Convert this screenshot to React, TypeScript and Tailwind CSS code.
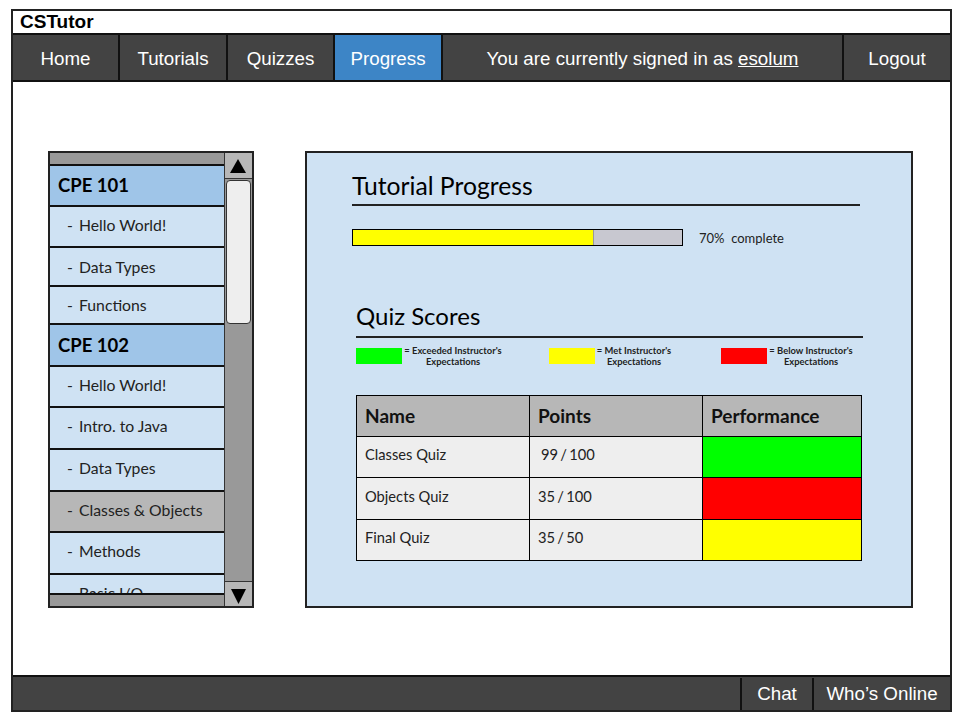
const lato = "font-['Lato','Noto_Sans',sans-serif]";
const arial = "font-['Liberation_Sans',Arial,sans-serif]";

function NavCell({ label, w, active }: { label: string; w: string; active?: boolean }) {
  return (
    <div className={`${w} h-full flex items-center justify-center pt-[3px] text-[18.75px] text-white border-r-2 border-[#111] ${active ? 'bg-[#3d85c6]' : 'bg-[#434343]'}`}>
      {label}
    </div>
  );
}

function Row({ label, h, sel, low }: { label: string; h: string; sel?: boolean; low?: boolean }) {
  return (
    <div className={`${h} shrink-0 flex items-center pl-[17px] ${low ? 'pb-0' : 'pb-[4px]'} text-[15.75px] text-[#222] border-b-2 border-[#111] ${sel ? 'bg-[#b7b7b7]' : 'bg-[#cfe2f3]'}`}>
      <span className="w-[12px]">-</span>
      <span>{label}</span>
    </div>
  );
}

function Head({ label, h, low }: { label: string; h: string; low?: boolean }) {
  return (
    <div className={`${h} shrink-0 flex items-center pl-[8px] ${low ? 'pt-[2px]' : ''} text-[18.5px] font-bold text-black bg-[#9fc5e8] border-b-2 border-[#111]`}>
      {label}
    </div>
  );
}

function Legend({ color, a, w, ml }: { color: string; a: string; w: string; ml: string }) {
  return (
    <div className={`flex items-start ${ml}`}>
      <div className={`w-[46px] h-[16px] ${color}`} />
      <div className={`${w} ml-[1px] -mt-[3px] text-center text-[9.4px] leading-[11px] font-bold text-[#222] whitespace-nowrap`}>
        <div>{a}</div>
        <div>Expectations</div>
      </div>
    </div>
  );
}

function TableRow({ name, pts, color, h, indent }: { name: string; pts: string; color: string; h: string; indent?: boolean }) {
  return (
    <div className={`flex ${h} border-b border-black`}>
      <div className="w-[173px] pl-[8px] pb-[5px] flex items-center text-[14.7px] text-[#222] bg-[#eeeeee] border-r border-black">{name}</div>
      <div className={`w-[173px] ${indent ? 'pl-[11px]' : 'pl-[8px]'} pb-[5px] flex items-center text-[14.7px] text-[#222] bg-[#eeeeee] border-r border-black [word-spacing:-1.5px]`}>{pts}</div>
      <div className={`flex-1 ${color}`} />
    </div>
  );
}

export default function App() {
  return (
    <div className="w-[960px] h-[720px] bg-white pt-[9px] pl-[11px]">
      <div className={`w-[941px] h-[703px] border-2 border-[#222] flex flex-col bg-white ${arial}`}>
        <div className="h-[22px] shrink-0 pl-[7px] flex items-center text-[19px] font-bold text-black">CSTutor</div>
        <div className="h-[49px] shrink-0 flex border-y-2 border-[#111] bg-[#434343]">
          <NavCell label="Home" w="w-[107px]" />
          <NavCell label="Tutorials" w="w-[108px]" />
          <NavCell label="Quizzes" w="w-[107px]" />
          <NavCell label="Progress" w="w-[108px]" active />
          <div className="w-[401px] h-full flex items-center justify-center pt-[3px] text-[18.75px] text-white border-r-2 border-[#111]">
            <span>You are currently signed in as <span className="underline">esolum</span></span>
          </div>
          <div className="flex-1 flex items-center justify-center pt-[3px] text-[18.75px] text-white">Logout</div>
        </div>

        <div className={`flex-1 flex items-start pl-[35px] pt-[69px] ${lato}`}>
          <div className="w-[206px] h-[457px] border-2 border-[#222] flex bg-[#999999]">
            <div className="w-[174px] h-full flex flex-col overflow-hidden">
              <div className="h-[13px] shrink-0 bg-[#999999] border-b-2 border-[#111]" />
              <div className="flex-1 overflow-hidden flex flex-col min-h-0">
                <Head label="CPE 101" h="h-[41px]" />
                <Row label="Hello World!" h="h-[41px]" />
                <Row label="Data Types" h="h-[39px]" low />
                <Row label="Functions" h="h-[38px]" low />
                <Head label="CPE 102" h="h-[42px]" low />
                <Row label="Hello World!" h="h-[41px]" />
                <Row label="Intro. to Java" h="h-[42px]" />
                <Row label="Data Types" h="h-[42px]" />
                <Row label="Classes & Objects" h="h-[41px]" sel />
                <Row label="Methods" h="h-[42px]" />
                <Row label="Basic I/O" h="h-[41px]" />
              </div>
              <div className="h-[13px] shrink-0 bg-[#999999] border-t-2 border-[#111]" />
            </div>
            <div className="flex-1 h-full flex flex-col border-l border-[#333]">
              <div className="h-[26px] shrink-0 bg-[#b7b7b7] border-b border-[#333] flex items-center justify-center pr-[1px]">
                <svg width="16" height="14" viewBox="0 0 16 14"><path d="M8 0 L16 14 L0 14 Z" fill="#000" /></svg>
              </div>
              <div className="flex-1 px-[1px] pt-[1px]">
                <div className="h-[144px] bg-[#eeeeee] border border-[#333] rounded-[4px]" />
              </div>
              <div className="h-[25px] shrink-0 bg-[#b7b7b7] border-t border-[#333] flex items-center justify-center pt-[4px] pr-[1px]">
                <svg width="15" height="15" viewBox="0 0 15 15"><path d="M0 0 L15 0 L7.5 15 Z" fill="#000" /></svg>
              </div>
            </div>
          </div>

          <div className="ml-[51px] w-[608px] h-[457px] border-2 border-[#222] bg-[#cfe2f3] pt-[19px] pl-[45px]">
            <div className="w-[508px] h-[34px] border-b-2 border-[#222] text-[24.7px] leading-[28px] text-black">Tutorial Progress</div>
            <div className="mt-[23px] h-[17px] flex items-center">
              <div className="w-[331px] h-[17px] border border-black bg-[#c8c8d0]">
                <div className="w-[73.2%] h-full bg-[#ffff00] border-r border-[#999]" />
              </div>
              <div className="ml-[16px] mt-[2px] text-[13px] text-[#222] whitespace-pre">70%  complete</div>
            </div>
            <div className="ml-[4px] mt-[56px] w-[507px] h-[36px] border-b-2 border-[#222] text-[24px] leading-[28px] text-black">Quiz Scores</div>
            <div className="ml-[4px] mt-[10px] flex h-[20px]">
              <Legend color="bg-[#00ff00]" a="= Exceeded Instructor's" w="w-[100px]" ml="" />
              <Legend color="bg-[#ffff00]" a="= Met Instructor's" w="w-[76px]" ml="ml-[46px]" />
              <Legend color="bg-[#ff0000]" a="= Below Instructor's" w="w-[86px]" ml="ml-[49px]" />
            </div>
            <div className="ml-[4px] mt-[27px] w-[506px] border border-black border-b-0">
              <div className="flex h-[41px] border-b border-black bg-[#b7b7b7] text-[19px] font-bold text-[#111]">
                <div className="w-[173px] pl-[8px] flex items-center border-r border-black">Name</div>
                <div className="w-[173px] pl-[8px] flex items-center border-r border-black">Points</div>
                <div className="flex-1 pl-[8px] flex items-center">Performance</div>
              </div>
              <TableRow name="Classes Quiz" pts="99 / 100" color="bg-[#00ff00]" h="h-[41px]" indent />
              <TableRow name="Objects Quiz" pts="35 / 100" color="bg-[#ff0000]" h="h-[42px]" />
              <TableRow name="Final Quiz" pts="35 / 50" color="bg-[#ffff00]" h="h-[41px]" />
            </div>
          </div>
        </div>

        <div className="h-[35px] shrink-0 flex border-t-2 border-[#111] bg-[#434343] pt-[1px] text-[18.75px] text-white">
          <div className="flex-1 border-r-2 border-[#111]" />
          <div className="w-[72px] flex items-center justify-center border-r-2 border-[#111]">Chat</div>
          <div className="w-[136px] flex items-center justify-center">Who’s Online</div>
        </div>
      </div>
    </div>
  );
}
